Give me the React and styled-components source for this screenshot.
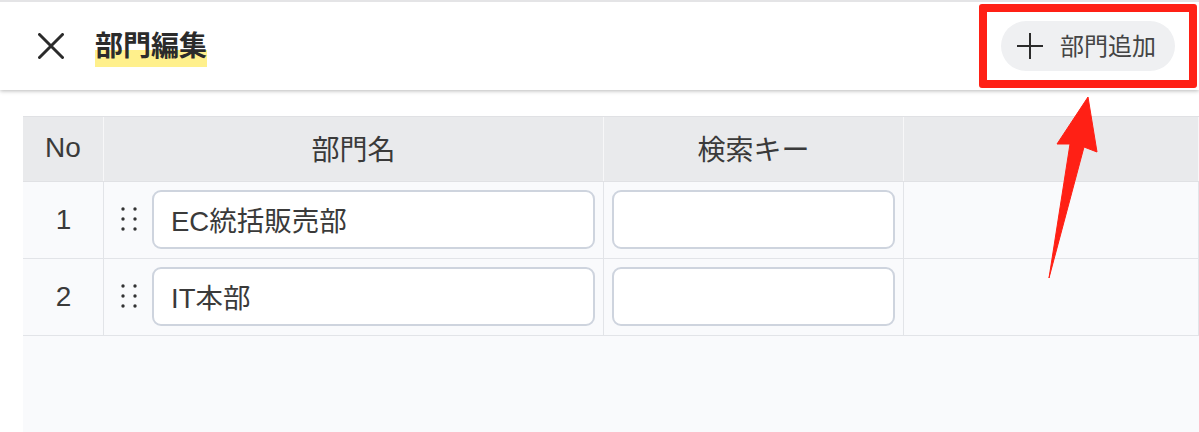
import React from 'react';
import styled, { createGlobalStyle } from 'styled-components';

const GlobalStyle = createGlobalStyle`
  html, body {
    margin: 0;
    padding: 0;
    background: #fff;
  }
  body {
    font-family: "Liberation Sans", "Noto Sans CJK JP", sans-serif;
    color: #333;
  }
`;

const departments = [
  { no: 1, name: 'EC統括販売部' },
  { no: 2, name: 'IT本部' },
];

const App = () => {
  return (
    <Page>
      <GlobalStyle />
      <Header>
        <TitleGroup>
          <CloseIcon viewBox="0 0 26 26">
            <path d="M1.5 1.5 L24.5 24.5 M24.5 1.5 L1.5 24.5" stroke="#2b2b2b" strokeWidth="3" strokeLinecap="round" />
          </CloseIcon>
          <Title>部門編集</Title>
        </TitleGroup>
        <AddButton>
          <PlusIcon viewBox="0 0 26 26">
            <path d="M13 0 V26 M0 13 H26" stroke="#2b2b2b" strokeWidth="2" />
          </PlusIcon>
          部門追加
        </AddButton>
      </Header>
      <Content>
        <Table>
          <HeadRow>
            <HeadCell>No</HeadCell>
            <HeadCell>部門名</HeadCell>
            <HeadCell>検索キー</HeadCell>
            <HeadCell />
          </HeadRow>
          {departments.map((d) => (
            <Row key={d.no}>
              <NoCell>{d.no}</NoCell>
              <Cell $hasGrip>
                <Grip viewBox="0 0 16 24">
                  {[2, 12, 22].map((y) => (
                    <g key={y} fill="#333">
                      <circle cx="2" cy={y} r="1.7" />
                      <circle cx="14" cy={y} r="1.7" />
                    </g>
                  ))}
                </Grip>
                <TextInput defaultValue={d.name} />
              </Cell>
              <Cell>
                <TextInput defaultValue="" />
              </Cell>
              <Cell />
            </Row>
          ))}
        </Table>
      </Content>
      <Highlight />
      <Arrow viewBox="0 0 60 190">
        <polygon points="40,1 49,56 36,51 1,182 22,48 9,48" fill="#ff2015" stroke="#ff2015" strokeWidth="1" strokeLinejoin="round" />
      </Arrow>
    </Page>
  );
};

const Page = styled.div`
  position: relative;
  width: 1199px;
  height: 432px;
  overflow: hidden;
  border-top: 2px solid #e4e4e6;
  box-sizing: border-box;
`;

const Header = styled.header`
  position: relative;
  height: 88px;
  background: #fff;
  display: flex;
  align-items: center;
  justify-content: space-between;
  padding: 0 24px 0 38px;
  box-shadow: 0 1px 4px rgba(0, 0, 0, 0.28);
  box-sizing: border-box;
`;

const TitleGroup = styled.div`
  display: flex;
  align-items: center;
  gap: 31px;
`;

const CloseIcon = styled.svg`
  width: 26px;
  height: 26px;
`;

const Title = styled.h1`
  margin: 3px 0 0;
  padding: 2px 0 3px;
  font-size: 28px;
  line-height: 34px;
  font-weight: 700;
  color: #2b2b2b;
  background: linear-gradient(transparent 56%, #fff08c 56%);
`;

const AddButton = styled.button`
  width: 174px;
  height: 50px;
  border: none;
  border-radius: 25px;
  background: #eff0f2;
  display: flex;
  align-items: center;
  padding: 0 0 3px 16px;
  gap: 17px;
  font-family: inherit;
  font-size: 24px;
  color: #444;
`;

const PlusIcon = styled.svg`
  width: 26px;
  height: 26px;
  flex: none;
  margin-top: 3px;
`;

const Content = styled.main`
  padding: 26px 0 0 23px;
`;

const Table = styled.div`
  background: #f9fafc;
  height: 316px;
`;

const columns = '81px 500px 300px 1fr';

const HeadRow = styled.div`
  display: grid;
  grid-template-columns: ${columns};
  height: 66px;
  background: #e9eaec;
  border-top: 1px solid #e0e1e4;
  border-bottom: 1px solid #e0e1e4;
  box-sizing: border-box;
`;

const HeadCell = styled.div`
  display: flex;
  align-items: center;
  justify-content: center;
  padding-bottom: 2px;
  font-size: 28px;
  color: #3a3a3a;
  border-right: 1px solid #f7f7f8;
`;

const Row = styled.div`
  display: grid;
  grid-template-columns: ${columns};
  height: 77px;
  border-bottom: 1px solid #e2e4e8;
  box-sizing: border-box;
`;

const Cell = styled.div`
  display: flex;
  align-items: center;
  padding: 0 8px 2px ${(p) => (p.$hasGrip ? '17px' : '8px')};
  gap: 15px;
  border-right: 1px solid #e2e4e8;
`;

const NoCell = styled(Cell)`
  justify-content: center;
  padding: 0 0 0 1px;
  font-size: 28px;
  color: #3a3a3a;
`;

const Grip = styled.svg`
  width: 16px;
  height: 24px;
  flex: none;
`;

const TextInput = styled.input`
  flex: 1;
  min-width: 0;
  height: 59px;
  box-sizing: border-box;
  border: 2px solid #ced4de;
  border-radius: 9px;
  background: #fff;
  padding: 0 17px;
  font-family: inherit;
  font-size: 27.5px;
  color: #3a3a3a;
  outline: none;
`;

const Highlight = styled.div`
  position: absolute;
  left: 979px;
  top: 2px;
  width: 218px;
  height: 84px;
  box-sizing: border-box;
  border: 8px solid #ff2015;
  border-radius: 3px;
`;

const Arrow = styled.svg`
  position: absolute;
  left: 1048px;
  top: 94px;
  width: 60px;
  height: 190px;
`;

export default App;
